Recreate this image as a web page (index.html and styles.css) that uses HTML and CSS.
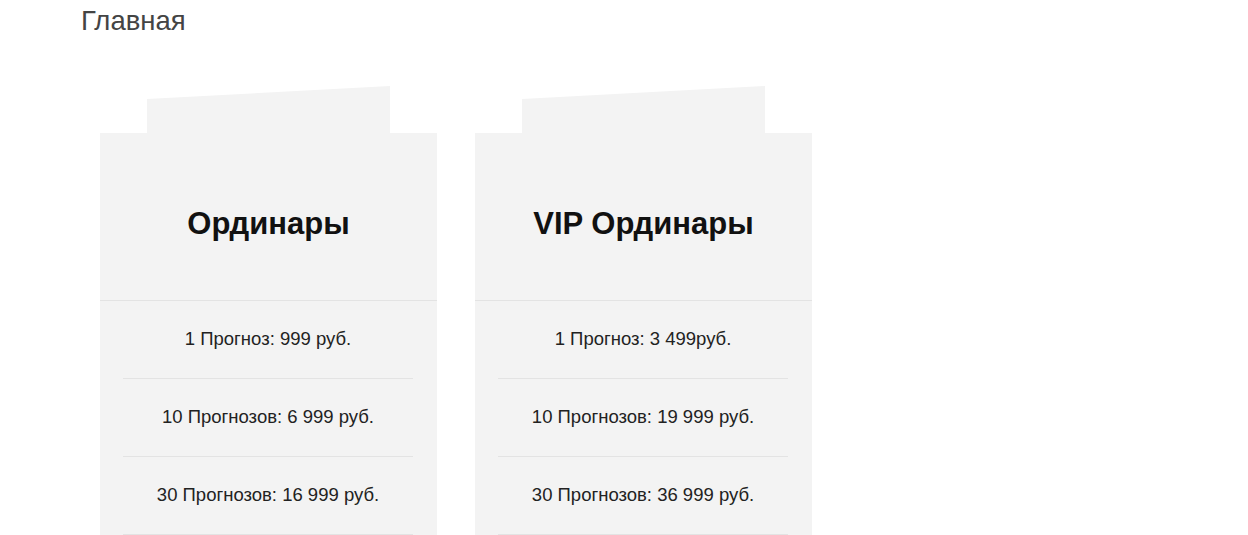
FILE: index.html
```html
<!DOCTYPE html>
<html lang="ru">
<head>
    <meta charset="UTF-8">
    <meta name="viewport" content="width=device-width, initial-scale=1.0">
    <title>Главная</title>
    <link rel="stylesheet" href="styles.css">
</head>
<body>
    <h1 class="page-title">Главная</h1>
    <div class="plans">
        <div class="plan">
            <div class="plan-tab"></div>
            <div class="plan-body">
                <h2 class="plan-name">Ординары</h2>
                <ul class="plan-prices">
                    <li>1 Прогноз: 999 руб.</li>
                    <li>10 Прогнозов: 6 999 руб.</li>
                    <li>30 Прогнозов: 16 999 руб.</li>
                </ul>
            </div>
        </div>
        <div class="plan">
            <div class="plan-tab"></div>
            <div class="plan-body">
                <h2 class="plan-name">VIP Ординары</h2>
                <ul class="plan-prices">
                    <li>1 Прогноз: 3 499руб.</li>
                    <li>10 Прогнозов: 19 999 руб.</li>
                    <li>30 Прогнозов: 36 999 руб.</li>
                </ul>
            </div>
        </div>
    </div>
</body>
</html>
```

FILE: styles.css
```css
* {
    margin: 0;
    padding: 0;
}
body {
    font-family: "Liberation Sans", Arial, sans-serif;
    background: #fff;
}
.page-title {
    font-size: 27.5px;
    font-weight: normal;
    color: #444;
    line-height: 30px;
    padding: 6px 0 0 81px;
}
.plans {
    display: flex;
    gap: 38px;
    padding: 50px 0 0 100px;
}
.plan {
    width: 337px;
}
.plan-tab {
    width: 243px;
    height: 47px;
    margin-left: 47px;
    background: #f3f3f3;
    clip-path: polygon(0 13px, 100% 0, 100% 100%, 0 100%);
}
.plan-body {
    background: #f3f3f3;
}
.plan-name {
    font-size: 31px;
    line-height: 32px;
    color: #111;
    text-align: center;
    padding: 75px 0 60px;
    border-bottom: 1px solid #e3e3e3;
}
.plan-prices {
    list-style: none;
    padding: 0 24px 0 23px;
}
.plan-prices li {
    font-size: 18.5px;
    line-height: 21px;
    color: #222;
    text-align: center;
    padding: 27px 0 29px;
    border-bottom: 1px solid #e3e3e3;
}
```
